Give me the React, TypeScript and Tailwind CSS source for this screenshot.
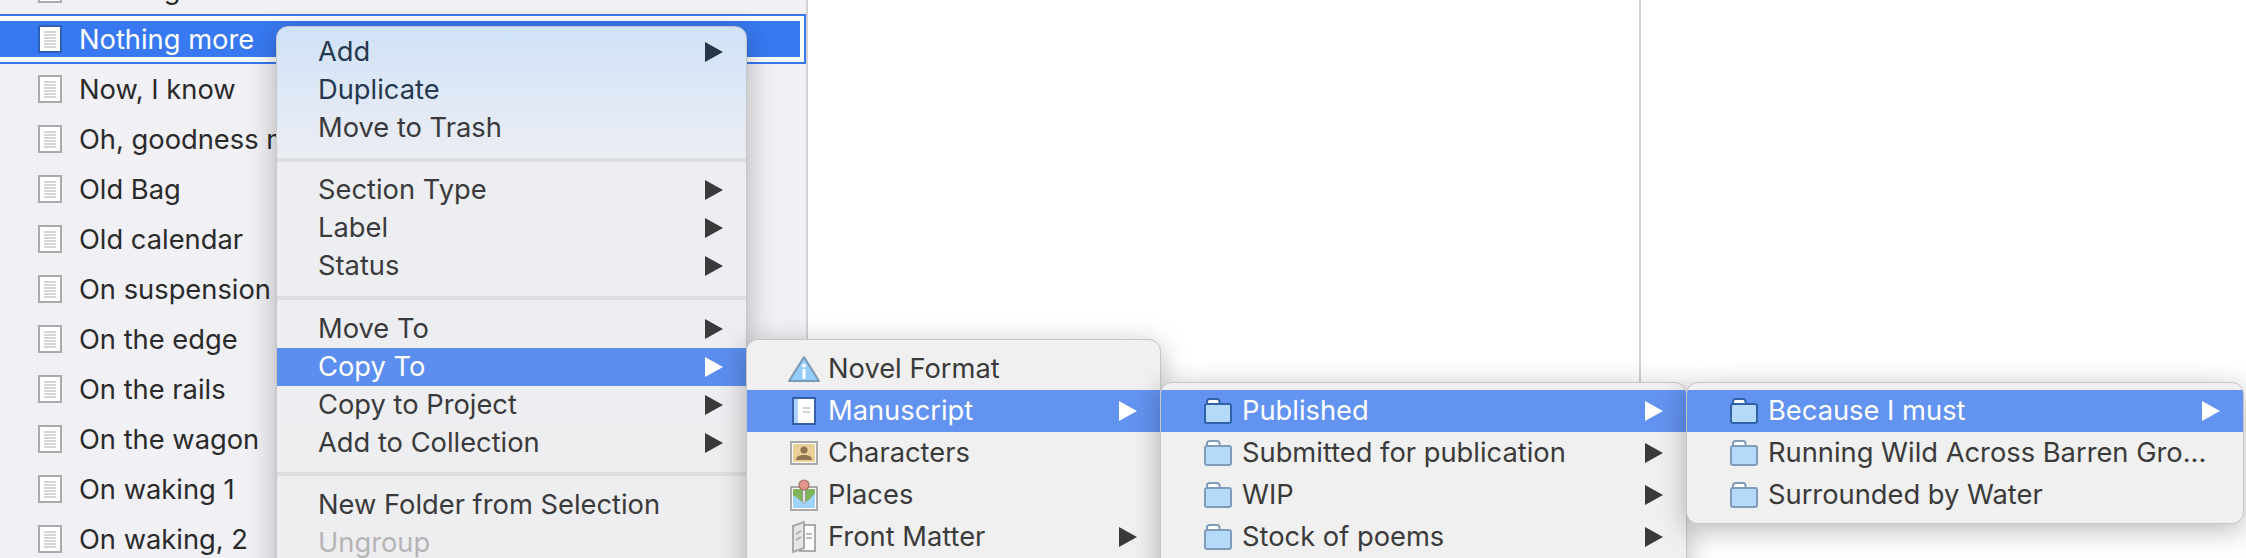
import React from "react";

const files = [
  "Now, I know",
  "Oh, goodness me",
  "Old Bag",
  "Old calendar",
  "On suspension",
  "On the edge",
  "On the rails",
  "On the wagon",
  "On waking 1",
  "On waking, 2",
];

const DocIcon: React.FC<{ selected?: boolean }> = ({ selected }) => (
  <svg width="24" height="28" viewBox="0 0 24 28" className="shrink-0">
    <rect x="1" y="1" width="22" height="26" fill="#fff" stroke={selected ? "#2f5fb5" : "#aaaaaa"} strokeWidth="2" />
    <path d="M6 7h12M6 10h12M6 13h12M6 16h12M6 19h12M6 22h12" stroke="#c9c9c9" strokeWidth="1.4" />
  </svg>
);

const Arrow: React.FC<{ color: string }> = ({ color }) => (
  <svg width="18" height="20" viewBox="0 0 18 20" className="shrink-0">
    <path d="M0 0L18 10L0 20Z" fill={color} />
  </svg>
);

const Folder: React.FC<{ active?: boolean }> = ({ active }) => {
  const line = active ? "#2f62a8" : "#7f9dba";
  return (
    <svg width="28" height="26" viewBox="0 0 28 26">
      <path d="M3 6V3.5C3 2 4 1 5.5 1H13C14.5 1 15.5 2 15.5 3.5V6" fill="#fff" stroke={line} strokeWidth="2" />
      <rect x="1" y="6" width="26" height="19" rx="2" fill="#b5d9f8" stroke={line} strokeWidth="2" />
    </svg>
  );
};

const InfoIcon = () => (
  <svg width="32" height="28" viewBox="0 0 32 28">
    <path d="M16 2L31 26H1Z" fill="#93cdfb" stroke="#7d9ab5" strokeWidth="2" strokeLinejoin="round" />
    <circle cx="16" cy="10.5" r="2" fill="#fff" />
    <rect x="14.5" y="14" width="3" height="10" fill="#fff" />
  </svg>
);

const ManuscriptIcon = () => (
  <svg width="24" height="28" viewBox="0 0 24 28">
    <rect x="1" y="1" width="22" height="26" fill="#fff" stroke="#355fa6" strokeWidth="2" />
    <rect x="2" y="2" width="4" height="24" fill="#a9d3f8" />
    <path d="M11 11h7M11 15h7" stroke="#c4c4c4" strokeWidth="1.6" />
  </svg>
);

const CharactersIcon = () => (
  <svg width="28" height="24" viewBox="0 0 28 24">
    <rect x="1" y="1" width="26" height="22" fill="#fff" stroke="#aaaaaa" strokeWidth="2" />
    <rect x="3" y="3" width="22" height="18" fill="#ecd09a" />
    <circle cx="14" cy="9" r="3.6" fill="#8b7552" />
    <path d="M6 19C6 15 10 14 14 14C18 14 22 15 22 19Z" fill="#8b7552" />
  </svg>
);

const PlacesIcon = () => (
  <svg width="28" height="32" viewBox="0 0 28 32">
    <rect x="1" y="8" width="26" height="23" fill="#fff" stroke="#aaaaaa" strokeWidth="2" />
    <rect x="3" y="10" width="22" height="19" fill="#7fb65a" />
    <path d="M3 17C8 17 9 23 14 23C19 23 22 17 25 14V29H3Z" fill="#9fd3fb" />
    <rect x="12.5" y="9" width="3" height="15" rx="1.5" fill="#e4e4e4" stroke="#8f8f8f" strokeWidth="0.8" />
    <circle cx="14" cy="6" r="5" fill="#e0958a" stroke="#a56f68" strokeWidth="1.2" />
  </svg>
);

const FrontMatterIcon = () => (
  <svg width="24" height="32" viewBox="0 0 24 32">
    <rect x="8" y="4" width="15" height="26" fill="#fff" stroke="#aaaaaa" strokeWidth="2" />
    <path d="M1 5L12 1V27L1 31Z" fill="#e6e6e6" stroke="#aaaaaa" strokeWidth="2" strokeLinejoin="round" />
    <path d="M4 13L9 10M4 19L9 16M14 13h6M14 17h6" stroke="#a8a8a8" strokeWidth="1.5" />
  </svg>
);

const MainRow: React.FC<{ label: string; arrow?: boolean; active?: boolean; disabled?: boolean; tint?: boolean }> = ({
  label,
  arrow,
  active,
  disabled,
  tint,
}) => (
  <div
    className={`flex h-[38px] items-center justify-between pl-[41px] pr-[23px] ${
      active ? "bg-[#5c8eef] text-white" : disabled ? "text-[#b5b5b5]" : tint ? "text-[#26384f]" : "text-[#3a3a3c]"
    }`}
  >
    <span className="pt-[1px]">{label}</span>
    {arrow && <Arrow color={active ? "#ffffff" : tint ? "#26364b" : "#3a3a3c"} />}
  </div>
);

const SubRow: React.FC<{ label: string; icon?: React.ReactNode; arrow?: boolean; active?: boolean }> = ({
  label,
  icon,
  arrow,
  active,
}) => (
  <div
    className={`flex h-[42px] items-center pl-[41px] pr-[23px] ${active ? "bg-[#6393f0] text-white" : "text-[#3a3a3a]"}`}
  >
    <div className="flex w-[32px] shrink-0 justify-center">{icon}</div>
    <span className="ml-[8px] flex-1 whitespace-nowrap">{label}</span>
    {arrow && <Arrow color={active ? "#ffffff" : "#3a3a3a"} />}
  </div>
);

const menuShell =
  "absolute overflow-hidden border border-[#c6c6c6] text-[27.3px] shadow-[0_6px_28px_rgba(0,0,0,0.28)]";

export default function App() {
  return (
    <div
      className="relative flex h-[558px] w-[2246px] overflow-hidden bg-white"
      style={{ fontFamily: "Inter, 'Noto Sans', sans-serif" }}
    >
      {/* binder */}
      <div className="h-full w-[808px] shrink-0 border-r-2 border-[#d2d2d2] bg-[#f0f0f5] text-[27.3px] text-[#2a2a2a]">
        <div className="-mt-[36px]">
          <div className="flex h-[50px] items-center pl-[38px]">
            <DocIcon />
            <span className="ml-[17px] pt-[2px]">Nothing at all</span>
          </div>
          <div className="-ml-[8px] flex h-[50px] items-center border-2 border-[#3879f2] bg-white p-[4px] text-white">
            <div className="flex h-[36px] w-full items-center bg-[#3879f2] pl-[40px]">
              <DocIcon selected />
              <span className="ml-[17px] pt-[2px]">Nothing more</span>
            </div>
          </div>
          {files.map((name) => (
            <div key={name} className="flex h-[50px] items-center pl-[38px]">
              <DocIcon />
              <span className="ml-[17px] pt-[2px]">{name}</span>
            </div>
          ))}
        </div>
      </div>

      {/* editor panes */}
      <div className="h-full w-[833px] shrink-0 border-r-2 border-[#d2d2d2]" />
      <div className="h-full flex-1" />

      {/* context menu */}
      <div
        className={`${menuShell} left-[276px] top-[26px] h-[560px] w-[471px] rounded-t-[12px] bg-[linear-gradient(180deg,#cfe2f8_0px,#e2e9f5_80px,#edeef2_150px,#eeeef0_100%)] pt-[6px]`}
      >
        <MainRow label="Add" arrow tint />
        <MainRow label="Duplicate" tint />
        <MainRow label="Move to Trash" />
        <div className="mb-[9px] mt-[11px] h-[4px] bg-[#dedfe3]" />
        <MainRow label="Section Type" arrow />
        <MainRow label="Label" arrow />
        <MainRow label="Status" arrow />
        <div className="mb-[10px] mt-[11px] h-[4px] bg-[#dedee0]" />
        <MainRow label="Move To" arrow />
        <MainRow label="Copy To" arrow active />
        <MainRow label="Copy to Project" arrow />
        <MainRow label="Add to Collection" arrow />
        <div className="my-[10px] h-[4px] bg-[#dedee0]" />
        <MainRow label="New Folder from Selection" />
        <MainRow label="Ungroup" disabled />
      </div>

      <div className={`${menuShell} left-[746px] top-[339px] h-[240px] w-[415px] rounded-t-[12px] bg-[#f0f0f0] pt-[8px]`}>
        <SubRow label="Novel Format" icon={<InfoIcon />} />
        <SubRow label="Manuscript" icon={<ManuscriptIcon />} arrow active />
        <SubRow label="Characters" icon={<CharactersIcon />} />
        <SubRow label="Places" icon={<PlacesIcon />} />
        <SubRow label="Front Matter" icon={<FrontMatterIcon />} arrow />
      </div>

      <div className={`${menuShell} left-[1160px] top-[382px] h-[200px] w-[527px] rounded-t-[12px] bg-[#f0f0f0] pt-[7px]`}>
        <SubRow label="Published" icon={<Folder active />} arrow active />
        <SubRow label="Submitted for publication" icon={<Folder />} arrow />
        <SubRow label="WIP" icon={<Folder />} arrow />
        <SubRow label="Stock of poems" icon={<Folder />} arrow />
      </div>

      <div className={`${menuShell} left-[1686px] top-[382px] h-[142px] w-[558px] rounded-[12px] bg-[#f0f0f0] pt-[7px]`}>
        <SubRow label="Because I must" icon={<Folder active />} arrow active />
        <SubRow label="Running Wild Across Barren Gro..." icon={<Folder />} />
        <SubRow label="Surrounded by Water" icon={<Folder />} />
      </div>
    </div>
  );
}
